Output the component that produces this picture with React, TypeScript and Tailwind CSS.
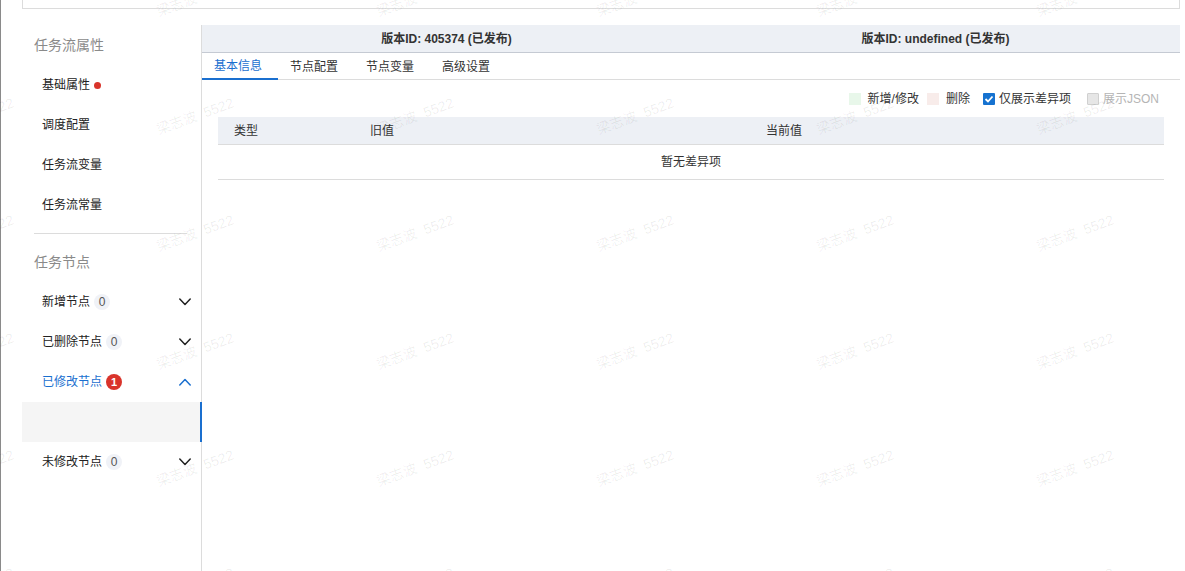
import React from "react";

const marks: { x: number; y: number }[] = [];
for (let r = 0; r < 6; r++) {
  for (let c = 0; c < 6; c++) {
    marks.push({ x: -25 + c * 220, y: -2 + r * 117.5 });
  }
}

const Chevron = ({ up = false, color = "#222" }: { up?: boolean; color?: string }) => (
  <svg width="12" height="8" viewBox="0 0 12 8" fill="none">
    <polyline
      points={up ? "0.8,7 6,1.6 11.2,7" : "0.8,1 6,6.4 11.2,1"}
      stroke={color}
      strokeWidth="1.5"
      strokeLinecap="round"
      strokeLinejoin="round"
    />
  </svg>
);

const CountBadge = ({ n }: { n: number }) => (
  <span className="ml-1 flex h-4 w-4 items-center justify-center rounded-full bg-[#f0f2f7] text-[12px] leading-none text-[#555]">
    {n}
  </span>
);

const NodeGroup = ({ label, count }: { label: string; count: number }) => (
  <div className="flex h-10 items-center pl-5 pr-[10px]">
    <span className="text-[12px] text-[#222]">{label}</span>
    <CountBadge n={count} />
    <span className="ml-auto flex">
      <Chevron />
    </span>
  </div>
);

const Sidebar = () => (
  <div className="flex w-[180px] shrink-0 flex-col border-r border-[#dcdcdc]">
    <div className="flex h-10 items-center pl-3 text-[14px] text-[#8a8a8a]">任务流属性</div>
    <div className="flex h-10 items-center pl-5 text-[12px] text-[#222]">
      基础属性
      <span className="ml-1 h-[7px] w-[7px] rounded-full bg-[#d9342b]" />
    </div>
    <div className="flex h-10 items-center pl-5 text-[12px] text-[#222]">调度配置</div>
    <div className="flex h-10 items-center pl-5 text-[12px] text-[#222]">任务流变量</div>
    <div className="flex h-10 items-center pl-5 text-[12px] text-[#222]">任务流常量</div>
    <div className="ml-3 mr-[14px] mt-2 h-px bg-[#dcdcdc]" />
    <div className="mt-2 flex h-10 items-center pl-3 text-[14px] text-[#8a8a8a]">任务节点</div>
    <NodeGroup label="新增节点" count={0} />
    <NodeGroup label="已删除节点" count={0} />
    <div className="flex h-10 items-center pl-5 pr-[10px]">
      <span className="text-[12px] text-[#1a6fcf]">已修改节点</span>
      <span className="ml-1 flex h-4 w-4 items-center justify-center rounded-full bg-[#d9342b] text-[11px] font-bold leading-none text-white">
        1
      </span>
      <span className="ml-auto flex">
        <Chevron up color="#1a6fcf" />
      </span>
    </div>
    <div className="h-10 border-r-2 border-[#1a6fcf] bg-[#f5f5f5] -mr-px" />
    <NodeGroup label="未修改节点" count={0} />
  </div>
);

const tabs = ["基本信息", "节点配置", "节点变量", "高级设置"];

const Main = () => (
  <div className="flex min-w-0 flex-1 flex-col">
    <div className="flex h-[28px] border-b border-[#c5cad3] bg-[#edf0f5] text-[12px] font-bold text-[#333]">
      <div className="flex flex-1 items-center justify-center">版本ID: 405374 (已发布)</div>
      <div className="flex flex-1 items-center justify-center">版本ID: undefined (已发布)</div>
    </div>
    <div className="flex h-[27px] border-b border-[#dcdcdc] text-[12px]">
      {tabs.map((t, i) => (
        <div
          key={t}
          className={
            i === 0
              ? "flex w-[76px] items-center border-b-2 border-[#1a6fcf] pl-3 text-[#1a6fcf] -mb-px"
              : "flex w-[76px] items-center pl-3 -mb-px text-[#333]"
          }
        >
          {t}
        </div>
      ))}
    </div>
    <div className="flex flex-col px-4">
      <div className="flex h-[37px] items-center justify-end pr-[5px] pt-px text-[12px] text-[#333]">
        <span className="h-3 w-3 bg-[#e8f7ea]" />
        <span className="ml-[7px]">新增/修改</span>
        <span className="ml-2 h-3 w-3 bg-[#f8ecea]" />
        <span className="ml-[7px]">删除</span>
        <span className="ml-[13px] flex h-3 w-3 items-center justify-center rounded-[1px] bg-[#1672d0]">
          <svg width="10" height="10" viewBox="0 0 10 10" fill="none">
            <polyline points="1.5,5 4,7.5 8.5,2.5" stroke="#fff" strokeWidth="1.8" />
          </svg>
        </span>
        <span className="ml-1">仅展示差异项</span>
        <span className="ml-4 h-3 w-3 rounded-[1px] border border-[#d0d0d0] bg-[#e6e6e6]" />
        <span className="ml-1 text-[#b5b5b5]">展示JSON</span>
      </div>
      <div className="flex h-[28px] items-center border-b border-[#dcdcdc] bg-[#edf0f5] text-[12px] text-[#333]">
        <div className="w-[136px] pl-4">类型</div>
        <div className="w-[396px] pl-4">旧值</div>
        <div className="flex-1 pl-4">当前值</div>
      </div>
      <div className="flex h-[35px] items-center justify-center border-b border-[#dcdcdc] text-[12px] text-[#333]">
        暂无差异项
      </div>
    </div>
  </div>
);

export default function App() {
  return (
    <div className="relative flex h-screen overflow-hidden bg-white font-['Liberation_Sans','Noto_Sans_CJK_SC',sans-serif]">
      <div className="w-px shrink-0 bg-[#8a8a8a]" />
      <div className="flex flex-1 flex-col pl-[21px] pr-[5px]">
        <div className="h-[9px] border-x border-b border-[#dcdcdc]" />
        <div className="mt-4 flex flex-1">
          <Sidebar />
          <Main />
        </div>
      </div>
      <div className="pointer-events-none absolute inset-0 overflow-hidden">
        {marks.map((m, i) => (
          <span
            key={i}
            className="absolute -translate-x-1/2 -translate-y-1/2 -rotate-[20deg] whitespace-nowrap text-[14px] leading-none text-black/[0.07]"
            style={{ left: m.x, top: m.y }}
          >
            梁志波&nbsp;&nbsp;5522
          </span>
        ))}
      </div>
    </div>
  );
}
